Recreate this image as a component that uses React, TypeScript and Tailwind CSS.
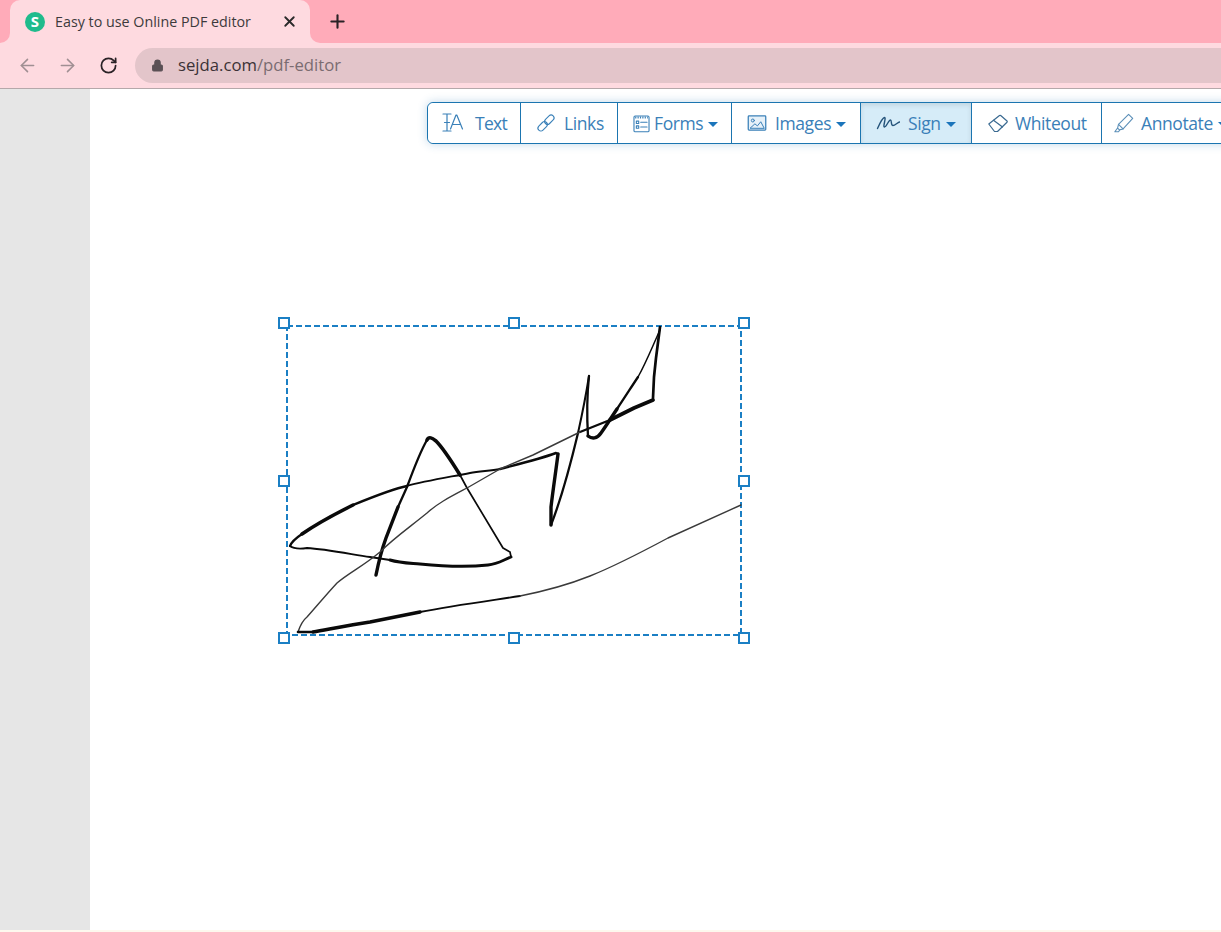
import { Lock, Plus, RotateCw, X, ArrowLeft, ArrowRight } from 'lucide-react';
import type { ReactNode } from 'react';

// signature strokes, in page coordinates
const strokes = [
  { w: 3.4, d: 'M376 575 C379 560 382 549 386 538 L398 507' },
  { w: 2.3, d: 'M398 507 L407 487 C414 468 420 452 427 440' },
  { w: 3.6, d: 'M427 440 C429 436 432 438 436 441 C444 449 452 462 460 475' },
  { w: 1.7, d: 'M460 475 L467 488 L503 548 L510 552 L511 557' },
  { w: 2.9, d: 'M511 557 C503 560 498 564 488 565 C470 567 440 566 420 564 C408 563 400 563 390 560' },
  { w: 1.8, d: 'M390 560 L370 557 C350 554 325 549 307 548 C300 549 294 549 290 546' },
  { w: 2.3, d: 'M290 546 C292 541 296 538 302 534' },
  { w: 3.5, d: 'M302 534 C315 525 335 514 353 505' },
  { w: 2.3, d: 'M353 505 C375 496 392 489 407 486' },
  { w: 1.8, d: 'M407 486 C425 481 450 477 470 473 C480 471 490 471 500 469' },
  { w: 2.5, d: 'M500 469 C515 465 540 459 556 453 L558 454' },
  { w: 3.4, d: 'M558 454 C556 470 553 490 551 507 L551 525' },
  { w: 2.3, d: 'M551 525 C558 507 568 475 578 433' },
  { w: 2, d: 'M578 433 C582 415 586 395 589 376' },
  { w: 2.3, d: 'M589 376 C587 395 587 420 588 436' },
  { w: 3.4, d: 'M588 436 C592 439 597 439 601 433 C606 426 611 418 617 409' },
  { w: 2.3, d: 'M617 409 C625 397 632 386 638 377' },
  { w: 1.5, d: 'M638 377 C646 363 653 345 660 330' },
  { w: 2.7, d: 'M660 327 L656 358 L654 377 L653 398' },
  { w: 3.8, d: 'M653 400 L634 408 L610 420' },
  { w: 2.3, d: 'M610 420 L580 432' },
  { w: 1.4, d: 'M580 432 L533 455 L500 469 L467 488 C450 497 438 503 427 513 C410 527 395 537 380 552 C362 567 350 572 337 583 C325 596 316 607 307 617 C302 621 300 626 298 632' },
  { w: 2.6, d: 'M298 632 L313 632' },
  { w: 3.4, d: 'M313 632 C330 629 350 625 370 622 C385 619 400 616 420 612' },
  { w: 1.8, d: 'M420 612 C450 606 480 602 520 596' },
  { w: 1.4, d: 'M520 596 C545 591 570 584 590 576 C610 568 640 553 668 538 L741 505' },
];

const handles = [
  'left-[-10px] top-[-10px]',
  'left-[220px] top-[-10px]',
  'left-[450px] top-[-10px]',
  'left-[-10px] top-[148px]',
  'left-[450px] top-[148px]',
  'left-[-10px] top-[305px]',
  'left-[220px] top-[305px]',
  'left-[450px] top-[305px]',
];

function Icon({ children, className, box = 24 }: { children: ReactNode; className: string; box?: number }) {
  return (
    <svg viewBox={`0 0 ${box} ${box}`} fill="none" stroke="currentColor" strokeWidth={1.2} strokeLinecap="round" strokeLinejoin="round" className={className}>
      {children}
    </svg>
  );
}

function Caret() {
  return <span className="ml-[5px] mt-[3px] h-0 w-0 border-x-[5px] border-t-[5px] border-x-transparent border-t-[#1b75bb]" />;
}

function ToolButton({ width, active, last, children }: { width: string; active?: boolean; last?: boolean; children: ReactNode }) {
  return (
    <div className={`flex h-full shrink-0 items-center ${width} ${last ? '' : 'border-r border-[#1b75b0]'} ${active ? 'bg-[#d6ecf8] shadow-[inset_0_2px_5px_rgba(0,0,0,0.1)]' : 'bg-white'}`}>
      {children}
    </div>
  );
}

function Toolbar() {
  return (
    <div className="flex h-[42px] w-max rounded-[6px] border border-[#1b75b0] bg-white font-['Open_Sans',sans-serif] text-[17.5px] tracking-[-0.4px] text-[#3a80b8] shadow-[0_0_10px_rgba(51,122,183,0.3)]">
      <ToolButton width="w-[93px] rounded-l-[6px] pl-[14px]">
        <Icon className="mr-[9px] h-[24px] w-[24px]">
          <path d="M1 3h8M1 20h8M5 3v17M2.500 11.500h5" />
          <path d="M8.500 18L14 4h.8L20.500 18M10.500 13.500h8" />
        </Icon>
        <span className="tracking-[-0.7px]">Text</span>
      </ToolButton>
      <ToolButton width="w-[97px] pl-[15px]">
        <Icon className="mr-[8px] h-[20px] w-[20px]">
          <rect x="1.500" y="12.500" width="13" height="7" rx="3.500" transform="rotate(-45 8 16)" strokeWidth={1.3} />
          <rect x="9.500" y="4.500" width="13" height="7" rx="3.500" transform="rotate(-45 16 8)" strokeWidth={1.3} />
        </Icon>
        Links
      </ToolButton>
      <ToolButton width="w-[114px] pl-[14px]">
        <Icon className="mr-[3px] h-[19px] w-[19px]">
          <rect x="2.500" y="2.500" width="19" height="20" rx="1.500" strokeWidth={1.4} />
          <path strokeWidth={2.400} strokeDasharray="1.500 1.500" strokeLinecap="butt" d="M4 4.500h16" />
          <path d="M5.500 9h3v3h-3zM11 10.500h8M5.500 15h3v3h-3zM11 16.500h8" strokeWidth={1.4} />
        </Icon>
        Forms
        <Caret />
      </ToolButton>
      <ToolButton width="w-[129px] pl-[15px]">
        <Icon className="mr-[8px] h-[20px] w-[20px]">
          <rect x="1.500" y="3.500" width="21" height="17" rx="1" fill="#e6f1f9" strokeWidth={1.5} />
          <circle cx="7" cy="9" r="1.800" />
          <path d="M4 18l5.500-5 3 2.500 4-5L20.500 18z" />
        </Icon>
        Images
        <Caret />
      </ToolButton>
      <ToolButton width="w-[111px] pl-[15px]" active>
        <Icon className="mr-[8px] h-[24px] w-[24px] text-[#24537a]">
          <path strokeWidth={1.4} d="M1.500 17.500C3.500 13 6.500 6.500 8.500 6.500 10.500 6.500 6.500 16 8.500 16 10.500 16 12.500 9 14.500 9 16 9 14.500 14.500 17 14.500 19 14.500 21 12 23.500 11" />
        </Icon>
        Sign
        <Caret />
      </ToolButton>
      <ToolButton width="w-[130px] pl-[16px]">
        <Icon className="mr-[7px] h-[20px] w-[20px] text-[#3a6a91]" box={20}>
          <path d="M.800 11L11.500 2.500a1 1 0 0 1 1.200 0L19 8a.8.8 0 0 1 0 1.200L9.500 18.500 6.500 18.500z" />
          <path d="M5.500 7.300L14.500 14" />
        </Icon>
        Whiteout
      </ToolButton>
      <ToolButton width="w-[140px] pl-[11px]" last>
        <Icon className="mr-[6px] h-[22px] w-[22px] text-[#5b8fb8]">
          <path d="M17 2.500L21.500 7 11 18.500 6 13.500z" />
          <path d="M6 13.500l-1 4 2 2 4-1M5 17.500l-3 4h4l1.500-2" />
        </Icon>
        Annotate
        <Caret />
      </ToolButton>
    </div>
  );
}

export default function App() {
  return (
    <div className="flex h-[932px] w-[1221px] flex-col overflow-hidden bg-white font-['Open_Sans',sans-serif]">
      {/* tab strip */}
      <div className="flex h-[43px] shrink-0 items-center bg-[#ffabb9] pl-[10px]">
        <div className="relative flex h-[43px] w-[300px] items-center rounded-t-[10px] bg-[#fedae0] pl-[15px]">
          <span className="absolute bottom-0 left-[-10px] h-[10px] w-[10px] bg-[#fedae0]">
            <span className="block h-full w-full rounded-br-[10px] bg-[#ffabb9]" />
          </span>
          <span className="absolute bottom-0 right-[-10px] h-[10px] w-[10px] bg-[#fedae0]">
            <span className="block h-full w-full rounded-bl-[10px] bg-[#ffabb9]" />
          </span>
          <span className="flex h-[20px] w-[20px] items-center justify-center rounded-full bg-[#1fbb8c] text-[15px] font-bold leading-none text-white">S</span>
          <span className="ml-[10px] text-[14.3px] text-[#3c3a3c]">Easy to use Online PDF editor</span>
          <X size={17} strokeWidth={2.6} className="absolute left-[271px] top-[13px] text-[#2a2a2a]" />
        </div>
        <Plus size={21} strokeWidth={2.4} className="ml-[17px] text-[#2a2226]" />
      </div>
      {/* address bar row */}
      <div className="flex h-[46px] shrink-0 items-center border-b border-[#b5a8aa] bg-[#fedae0] pb-[1px] pl-[17px]">
        <ArrowLeft size={21} strokeWidth={1.8} className="text-[#a08f93]" />
        <ArrowRight size={21} strokeWidth={1.8} className="ml-[19px] text-[#a08f93]" />
        <RotateCw size={19} strokeWidth={2.2} className="ml-[21px] text-[#2a2226]" />
        <div className="ml-[17px] flex h-[35px] flex-1 items-center rounded-l-full bg-[#e3c5ca] pl-[16px]">
          <Lock size={13} fill="#5a5055" strokeWidth={2} className="text-[#5a5055]" />
          <span className="ml-[14px] text-[16.7px] text-[#3b3236]">
            sejda.com<span className="text-[#7a6c71]">/pdf-editor</span>
          </span>
        </div>
      </div>
      {/* page */}
      <div className="flex flex-1">
        <div className="w-[90px] shrink-0 bg-[#e6e6e6]" />
        <div className="relative flex-1 bg-white pl-[337px] pt-[13px]">
          <Toolbar />
          {/* selected signature */}
          <div className="absolute left-[198px] top-[238px] h-[307px] w-[452px]">
            <svg viewBox="288 327 452 307" fill="none" strokeLinecap="round" strokeLinejoin="round" className="h-full w-full overflow-visible">
              <rect x="287" y="326" width="454" height="309" stroke="#1b7fc4" strokeWidth={2} strokeDasharray="6 3" strokeLinecap="butt" />
              {strokes.map((s, i) => (
                <path key={i} d={s.d} strokeWidth={s.w} stroke={s.w < 1.5 ? '#3a3a3a' : '#0a0a0a'} />
              ))}
            </svg>
            {handles.map(h => (
              <span key={h} className={`absolute h-[12px] w-[12px] border-2 border-[#1b7fc4] bg-white ${h}`} />
            ))}
          </div>
        </div>
      </div>
      <div className="h-[2px] shrink-0 bg-[#fdf8ee]" />
    </div>
  );
}
